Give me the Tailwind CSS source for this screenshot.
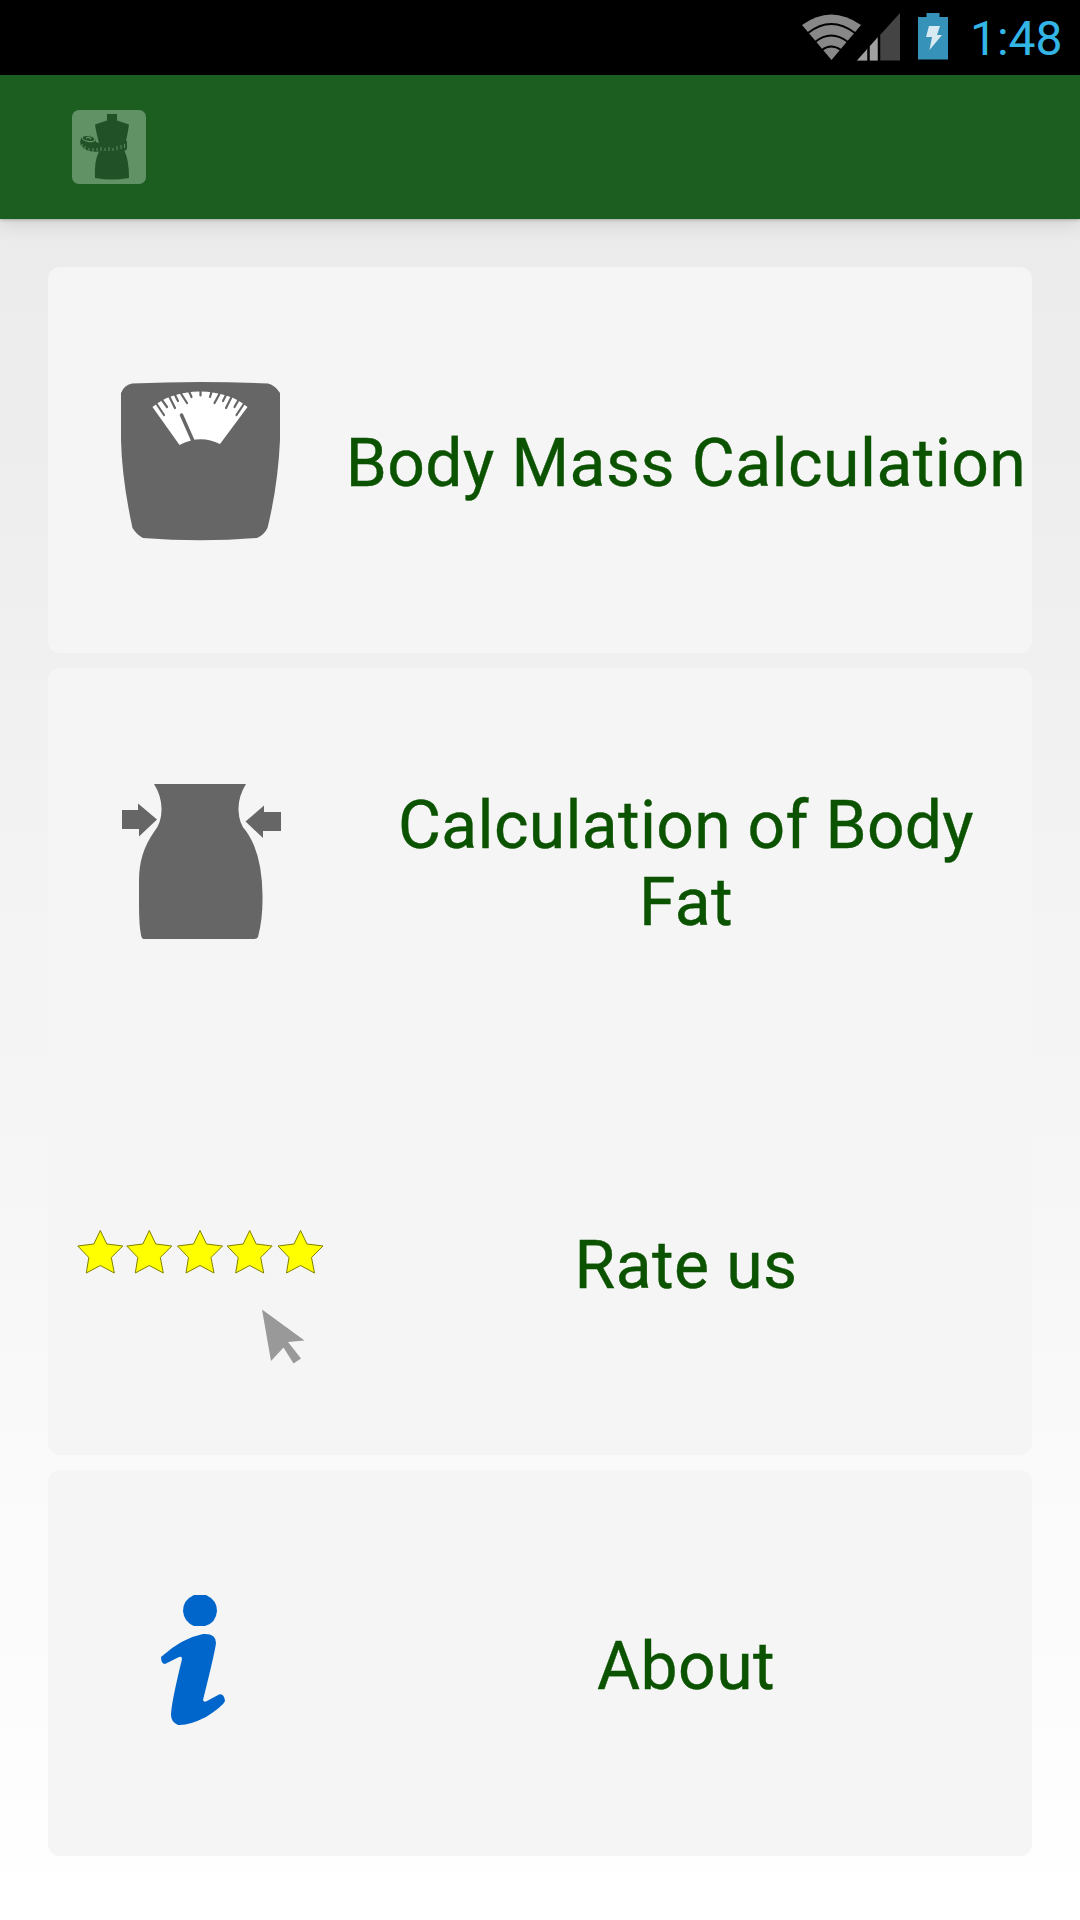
<!DOCTYPE html>
<html lang="en">
<head>
  <meta charset="UTF-8" />
  <title>Body Calculator</title>
  <script src="https://cdn.jsdelivr.net/npm/@tailwindcss/browser@4"></script>
</head>

<body class="w-[1080px] h-[1920px] flex flex-col overflow-hidden bg-black font-[Roboto,sans-serif]">

  <!-- STATUS BAR -->
  <header class="h-[75px] shrink-0 bg-black flex">
    <svg class="ml-[800px] w-[150px] h-[75px] shrink-0" viewBox="0 0 150 75">
      <path d="M2 25Q31 4 61 25L31.5 60Z" fill="#888" />
      <g fill="none" stroke="#000" stroke-width="2">
        <path d="M8 33Q31 15 55 33" />
        <path d="M15 42Q31 29 48 42" />
        <path d="M22 50Q31 43 41 50" />
      </g>
      <path d="M57 60.500L100 13V60.500Z" fill="#444" />
      <path d="M57 60.500L78 37V60.500Z" fill="#a0a0a0" />
      <path d="M68.500 46V61M79 35V61" stroke="#000" stroke-width="2.500" />
      <path d="M118 17h8.500v-4h13v4H148V59.500H118Z" fill="#3792b9" />
      <path d="M129 26h11l-3 9h5L129.500 50l2.500-13h-6Z" fill="#d7e9f1" />
    </svg>
    <span class="ml-[20px] mt-[9px] text-[48px] leading-[60px] text-[#33b5e5]">1:48</span>
  </header>

  <!-- ACTION BAR -->
  <div class="h-[144px] shrink-0 bg-[#1b5e20] flex items-center pl-[72px] relative z-10 shadow-[0_0_4px_rgba(0,0,0,0.35),0_4px_20px_rgba(0,0,0,0.12)]">
    <svg class="w-[74px] h-[74px]" viewBox="0 0 74 74">
      <rect width="74" height="74" rx="7" fill="#619265" />
      <path d="M35 4H45V10.500L57 14.500Q56 22 54 31L55 31V39L52.500 41Q57 50 57 68Q40 71 23 68Q22 51 27 41.500Q14 43 8.500 35Q7 25 15 25Q24 26 24 32L27 33Q24 22 23 14.500L35 10.500Z" fill="#215227" />
      <g fill="none" stroke="#619265" stroke-width="1.300">
        <ellipse cx="16.500" cy="28.500" rx="6.500" ry="3" transform="rotate(10 16.500 28.500)" />
        <path d="M14 28q3-1.500 5 1" />
        <path d="M10 34v4M13 36v4M17 38v4M21 38v4M25 38v3M29 37v4M33 38v3M37 37v4M41 38v3M45 36v4M49 35v4M52.500 34v4" stroke-width="0.900" />
      </g>
    </svg>
  </div>

  <!-- MENU -->
  <main class="flex-1 bg-linear-to-b from-[#ebebeb] to-white px-[48px] pt-[48px] flex flex-col gap-[15px]">
    <a class="h-[386px] shrink-0 rounded-[12px] bg-[#f5f5f5] flex items-center">
      <svg class="ml-[24px] w-[256px] h-[256px] shrink-0" viewBox="72 332 256 256">
        <path d="M132 383.500Q200 380.500 268 383.500Q275 385 280 393V440Q278 485 267.500 528Q264 535 257 538Q200 542.500 143 538Q137 535 132.500 528Q122 480 121 440V393Q124 385 132 383.500Z" fill="#666" />
        <path d="M152.500 407Q170 392 200 391.500Q230 392 247.500 407L220 444Q200 434 179.500 445Z" fill="#fff" />
        <g stroke="#666" stroke-width="2.200" stroke-linecap="round">
          <path d="M156 403L164 415M162 400L167 407M169 396L175 408M174.500 394L178 401M180 392L187 403M188.500 390L191.500 397M200.500 390V395.500M212 390L210 397M220.500 392L214.500 403M226.500 394L223 401M232 396L226 408M238.500 400L234.500 407M244.500 403L236.500 415" />
        </g>
        <path d="M181.500 415L193 441" stroke="#666" stroke-width="3.500" stroke-linecap="round" />
      </svg>
      <span class="flex-1 pl-[12px] pt-1.5 text-center text-[66px] leading-[77px] tracking-[0.45px] text-[#0b5300] whitespace-nowrap [-webkit-text-stroke:0.4px_#0b5300]">Body Mass Calculation</span>
    </a>
    <a class="h-[386px] shrink-0 rounded-[12px] bg-[#f5f5f5] flex items-center">
      <svg class="ml-[24px] w-[256px] h-[256px] shrink-0" viewBox="72 733 256 256">
        <g fill="#666">
          <path d="M154 784H246Q238 797 238.500 810Q239 824 246 831Q262 853 262.500 895Q263 918 258 937Q257 939 254 939H143Q141 937 141 935Q139 925 139 905V880Q139 853 154 832Q162 822 161.500 808Q161 795 154 784Z" />
          <path d="M122 810H138V803.500L157 819.500L139 836.500V829H122Z" />
          <path d="M281 812H264V805.500L245.500 821.500L263 838V831H281Z" />
        </g>
      </svg>
      <span class="flex-1 pl-[12px] pt-1.5 text-center text-[66px] leading-[77px] tracking-[0.3px] text-[#0b5300] [-webkit-text-stroke:0.4px_#0b5300]">Calculation of Body<br />Fat</span>
    </a>
    <a class="h-[386px] shrink-0 rounded-[12px] bg-[#f5f5f5] flex items-center">
      <svg class="ml-[24px] w-[256px] h-[256px] shrink-0" viewBox="72 1134 256 256">
        <defs>
          <path id="star" d="M0-22L6.500-8.500L22.500-6.500L11 5L14 20.500L0 13L-14 20.500L-11.500 5L-22.500-6.500L-6.500-8.500Z" fill="#ff0" stroke="#808000" stroke-width="1" />
        </defs>
        <use href="#star" x="100.300" y="1252.500" />
        <use href="#star" x="149.300" y="1252.500" />
        <use href="#star" x="200" y="1252.500" />
        <use href="#star" x="249.700" y="1252.500" />
        <use href="#star" x="300.500" y="1252.500" />
        <path d="M262 1309.500L304.500 1340.500L288 1342L301 1358.500L293.500 1363.500L283.500 1347.500L271 1361Z" fill="#999" />
      </svg>
      <span class="flex-1 pl-[12px] pt-1.5 text-center text-[66px] leading-[77px] tracking-[0.4px] text-[#0b5300] [-webkit-text-stroke:0.4px_#0b5300]">Rate us</span>
    </a>
    <a class="h-[386px] shrink-0 rounded-[12px] bg-[#f5f5f5] flex items-center">
      <svg class="ml-[24px] w-[256px] h-[256px] shrink-0" viewBox="72 1535 256 256">
        <g fill="#06c">
          <path d="M194 1595H206Q217 1600 217 1611Q216 1623 205 1626H194Q184 1622 183 1611Q183 1600 194 1595Z" />
          <path d="M161 1657Q182 1638 203 1634Q216 1633 216 1643Q215 1652 203 1700Q204 1703 207 1701L219 1694.500Q224 1693 225 1701Q223 1706 206 1717Q188 1726 178 1725Q171 1722 171 1715Q171 1704 182 1659Q182 1656 179 1657L165 1664Q161 1664 161 1657Z" />
        </g>
      </svg>
      <span class="flex-1 pl-[12px] pt-1.5 text-center text-[66px] leading-[77px] tracking-[0.5px] text-[#0b5300] [-webkit-text-stroke:0.4px_#0b5300]">About</span>
    </a>
  </main>

</body>
</html>
